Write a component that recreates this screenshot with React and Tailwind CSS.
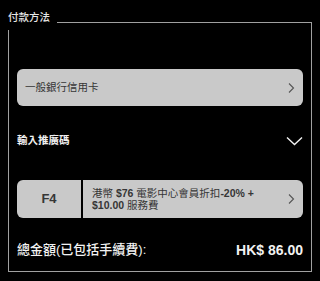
export default function App() {
  const font = { fontFamily: '"Liberation Sans", "Noto Sans CJK TC", sans-serif' };
  return (
    <div className="relative w-[320px] h-[281px] bg-black text-white" style={font}>
      <div className="absolute left-[8px] top-[10px] bg-black pr-[7px] pb-[5px] text-[10.5px] leading-[15px] text-[#e6e6e6] font-medium">
        付款方法
      </div>
      <div className="ml-[8px] pt-[22px] w-[304px]">
        <div className="h-[250px] border border-[#a0a0a0] px-[8px] pt-[46px] flex flex-col">
          <div className="h-[37px] rounded-[6px] bg-[#c9c9c9] flex items-center justify-between pl-[8px] pr-[8px]">
            <span className="text-[10.5px] text-[#363636]">一般銀行信用卡</span>
            <svg width="8" height="12" viewBox="0 0 8 12" fill="none" stroke="#555" strokeWidth="1.1">
              <path d="M2 1.5 L6.5 6 L2 10.5" />
            </svg>
          </div>
          <div className="mt-[25px] h-[20px] flex items-center justify-between">
            <span className="text-[10.5px] font-semibold text-[#f0f0f0]">輸入推廣碼</span>
            <svg width="17" height="10" viewBox="0 0 17 10" fill="none" stroke="#f2f2f2" strokeWidth="1.4">
              <path d="M1 1.5 L8.5 8.5 L16 1.5" />
            </svg>
          </div>
          <div className="mt-[29px] h-[38px] rounded-[6px] bg-[#c9c9c9] flex overflow-hidden">
            <div className="w-[64px] flex items-center justify-center text-[13px] font-bold text-[#363636]">F4</div>
            <div className="w-[2px] bg-black" />
            <div className="flex-1 flex items-center justify-between pl-[9px] pr-[8px]">
              <div className="text-[10.5px] leading-[12px] text-[#363636]">
                <div>港幣 <b>$76</b> 電影中心會員折扣<b>-20% +</b></div>
                <div><b>$10.00</b> 服務費</div>
              </div>
              <svg width="8" height="12" viewBox="0 0 8 12" fill="none" stroke="#555" strokeWidth="1.1">
                <path d="M2 1.5 L6.5 6 L2 10.5" />
              </svg>
            </div>
          </div>
          <div className="mt-[22px] h-[20px] flex items-center justify-between">
            <span className="text-[13px] font-medium text-[#f2f2f2]">總金額(已包括手續費):</span>
            <span className="text-[14px] font-bold text-[#f2f2f2]">HK$ 86.00</span>
          </div>
        </div>
      </div>
    </div>
  );
}
